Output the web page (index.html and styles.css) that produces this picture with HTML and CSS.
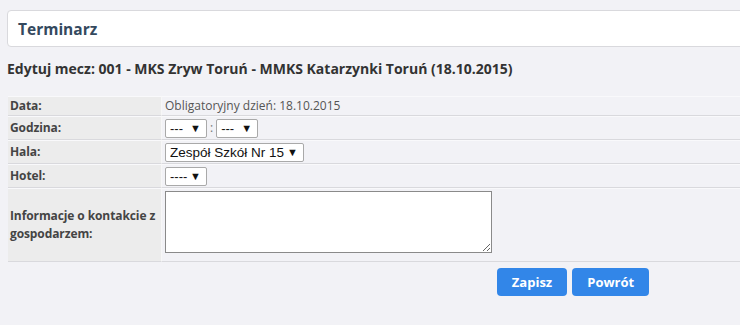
FILE: index.html
```html
<!DOCTYPE html>
<html lang="pl">
	<head>
		<meta charset="UTF-8" />
		<meta name="viewport" content="width=device-width, initial-scale=1.0" />
		<title>Terminarz</title>
		<link rel="stylesheet" href="styles.css">
	</head>
	<body>
		<div class="page">
			<div class="panel">
				<h1 class="panel-title">Terminarz</h1>
			</div>

			<h2 class="match-title">Edytuj mecz: 001 - MKS Zryw Toruń - MMKS Katarzynki Toruń (18.10.2015)</h2>

			<form class="match-form">
				<table class="form-table">
					<tr class="row-data">
						<th>Data:</th>
						<td>Obligatoryjny dzień: 18.10.2015</td>
					</tr>
					<tr>
						<th>Godzina:</th>
						<td>
							<div class="field-group"><span class="select-wrap"><select class="sel-short"><option>---</option></select></span><span class="sep">:</span><span class="select-wrap"><select class="sel-short"><option>---</option></select></span></div>
						</td>
					</tr>
					<tr>
						<th>Hala:</th>
						<td>
							<div class="field-group"><span class="select-wrap"><select class="sel-hala"><option>Zespół Szkół Nr 15</option></select></span></div>
						</td>
					</tr>
					<tr>
						<th>Hotel:</th>
						<td>
							<div class="field-group"><span class="select-wrap"><select class="sel-short"><option>----</option></select></span></div>
						</td>
					</tr>
					<tr class="row-info">
						<th>Informacje o kontakcie z gospodarzem:</th>
						<td><textarea class="contact"></textarea></td>
					</tr>
				</table>

				<div class="btn-container">
					<button type="button" class="btn">Zapisz</button>
					<button type="button" class="btn">Powrót</button>
				</div>
			</form>
		</div>
	</body>
</html>
```

FILE: styles.css
```css
html {
	overflow: hidden;
}

body {
	margin: 0;
	padding: 10px 0 0 7px;
	background: #f2f2f6;
	color: #333;
	font-family: 'Open Sans', 'Liberation Sans', sans-serif;
}

.page {
	width: 1132px;
}

.panel {
	background: #fff;
	border: 1px solid #d9d9dd;
	border-radius: 4px;
	height: 35px;
	display: flex;
	align-items: center;
	padding: 0 10px;
}

.panel-title {
	margin: 0;
	font-size: 15.5px;
	font-weight: 700;
	color: #34495e;
}

.match-title {
	margin: 12px 0 18px 0;
	font-size: 14px;
	font-weight: 700;
	color: #333;
}

.form-table {
	width: 100%;
	margin-left: 1px;
	border-collapse: separate;
	border-spacing: 0;
	font-size: 12px;
}

.form-table th,
.form-table td {
	border-top: 1px solid #f9f9fb;
	border-bottom: 1px solid #d9d9dd;
	padding: 0;
	height: 22px;
	line-height: 16px;
	vertical-align: middle;
}

.form-table th {
	width: 150px;
	padding: 0 1px 0 2px;
	background: #ececec;
	border-right: 1px solid #f7f7f7;
	text-align: left;
	font-weight: 700;
	color: #444;
	letter-spacing: -0.1px;
}

.form-table td {
	color: #555;
	padding-left: 3px;
}

.row-data th,
.row-data td {
	height: 18px;
}

.row-info th,
.row-info td {
	height: 72px;
	line-height: 18px;
}

.row-info td {
	vertical-align: top;
	padding-top: 2px;
	height: 70px;
}

.field-group {
	display: flex;
	align-items: center;
}

.select-wrap {
	position: relative;
	display: block;
}

.select-wrap::after {
	content: '\25BC';
	position: absolute;
	right: 6px;
	top: 2px;
	font-size: 11px;
	line-height: 14px;
	color: #111;
	pointer-events: none;
}

select {
	display: block;
	-webkit-appearance: none;
	appearance: none;
	font-family: 'Liberation Sans', Arial, sans-serif;
	font-size: 13px;
	color: #111;
	background: #fff;
	border: 1px solid #a9a9a9;
	border-radius: 2px;
	height: 19px;
	padding: 0 0 0 4px;
	margin: 0;
	outline: none;
}

.sel-short {
	width: 42px;
}

.sel-hala {
	width: 139px;
	font-size: 13.5px;
}

.sep {
	color: #777;
	margin: 0 3px;
}

.contact {
	display: block;
	width: 327px;
	height: 62px;
	box-sizing: border-box;
	border: 1px solid #8a8a8a;
	background: #fff;
	margin: 0;
	resize: both;
}

.btn-container {
	display: flex;
	justify-content: center;
	gap: 5px;
	margin-top: 6px;
}

.btn {
	height: 28px;
	padding: 0 15px;
	border: none;
	border-radius: 4px;
	background: #3286e8;
	color: #fff;
	font-family: 'Open Sans', sans-serif;
	font-size: 13px;
	font-weight: 700;
}
```
